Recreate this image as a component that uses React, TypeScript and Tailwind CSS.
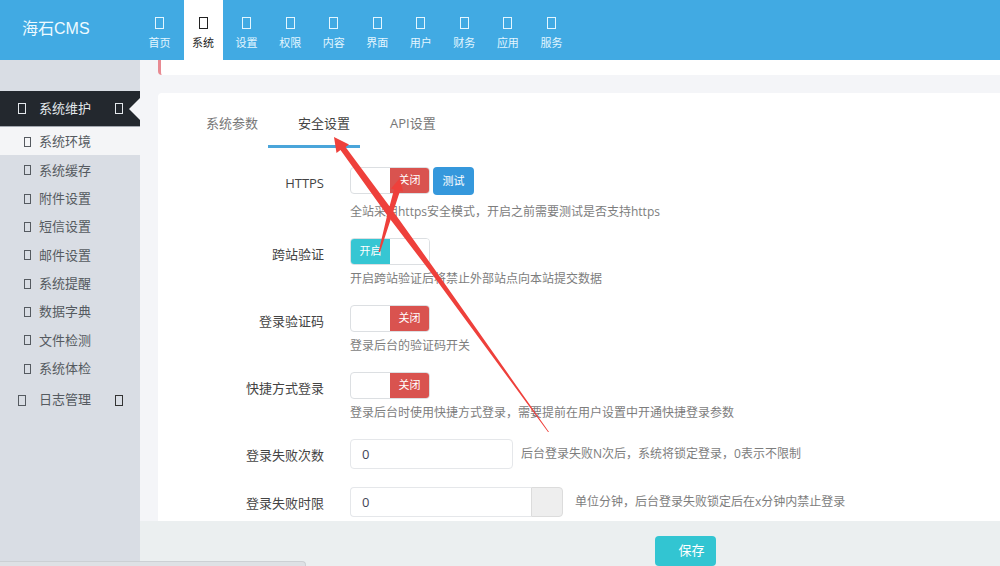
import type { ReactNode } from 'react'

const navItems = ['首页', '系统', '设置', '权限', '内容', '界面', '用户', '财务', '应用', '服务']

const subItems = [
  '系统环境',
  '系统缓存',
  '附件设置',
  '短信设置',
  '邮件设置',
  '系统提醒',
  '数据字典',
  '文件检测',
  '系统体检',
]

const tabs = ['系统参数', '安全设置', 'API设置']

function Switch({ id, on }: { id: string; on?: boolean }) {
  return (
    <label className="relative flex h-[27px] w-20 cursor-pointer overflow-hidden rounded border border-[#dcdfe2] bg-white text-[11px] text-white">
      <input id={id} type="checkbox" defaultChecked={on} className="peer sr-only" />
      <span className="flex w-1/2 items-center justify-center peer-checked:bg-[#36c6d3]">{on ? '开启' : ''}</span>
      <span className="flex w-1/2 items-center justify-center bg-[#d9534f] peer-checked:bg-white">{on ? '' : '关闭'}</span>
    </label>
  )
}

function Row({ id, label, help, children }: { id: string; label: string; help?: string; children: ReactNode }) {
  return (
    <div className="flex gap-[26px]">
      <label htmlFor={id} className="w-[148px] shrink-0 pt-1.5 text-right text-[13px] leading-5 text-[#444]">
        {label}
      </label>
      <div className="min-h-8 flex-1">
        {children}
        {help && <p className="mt-1 text-xs leading-5 text-[#7d7d7d]">{help}</p>}
      </div>
    </div>
  )
}

export default function App() {
  return (
    <div className="relative flex h-screen flex-col overflow-hidden bg-[#f4f5f8] font-['Open_Sans','Noto_Sans_CJK_SC',sans-serif]">
      <header className="flex h-15 shrink-0 bg-[#41aae3] text-white">
        <a href="#" className="w-[140px] pl-[22px] pt-[17px] font-['Liberation_Sans','Noto_Sans_CJK_SC',sans-serif] text-base leading-6 text-[#eefaff]">
          海石CMS
        </a>
        <nav className="flex w-[431px] justify-between">
          {navItems.map((item) => (
            <a
              key={item}
              href="#"
              className={`flex w-[39px] flex-col items-center pt-[17px] text-[11px] leading-4 ${
                item === '系统' ? 'bg-white text-[#222]' : 'text-[#e3f6ff]'
              }`}
            >
              <span className="mb-1.5 h-3 w-[9px] border border-current" />
              {item}
            </a>
          ))}
        </nav>
      </header>

      <div className="flex min-h-0 flex-1">
        <aside className="w-[140px] shrink-0 bg-[#d9dde4] pt-[31px] text-[13px] text-[#555a60]">
          <a href="#" className="relative flex h-9 items-center border-b border-[#a3a8b0] bg-[#23282e] pl-[18px] text-[#e4e8ec]">
            <span className="h-[11px] w-2 border border-current" />
            <span className="ml-[13px]">系统维护</span>
            <span className="ml-auto mr-[17px] h-[11px] w-2 border border-current" />
            <svg className="absolute right-0 top-[7px] h-[22px] w-[11px]" viewBox="0 0 11 22">
              <path d="M11 0v22L0 11z" fill="#f4f5f8" />
            </svg>
          </a>
          <ul className="flex h-[255px] flex-col">
            {subItems.map((item, i) => (
              <li key={item} className={`flex-1 ${i === 0 ? 'bg-[#f4f5f7]' : ''}`}>
                <a href="#" className="flex h-full items-center gap-2 pl-6 pt-0.5">
                  <span className="h-2.5 w-[7px] border border-current" />
                  {item}
                </a>
              </li>
            ))}
          </ul>
          <a href="#" className="flex h-9 items-center pl-[18px]">
            <span className="h-[11px] w-2 border border-current" />
            <span className="ml-[13px]">日志管理</span>
            <span className="ml-auto mr-[17px] h-[11px] w-2 border border-[#333]" />
          </a>
        </aside>

        <main className="flex min-w-0 flex-1 flex-col">
          <div className="min-h-0 flex-1 overflow-hidden pl-[18px]">
            <div className="h-[15px] rounded-bl border-l-[3px] border-[#e88a92] bg-white" />
            <section className="mt-[18px] h-full rounded-tl bg-white pl-[18px]">
              <div className="flex h-[55px]" role="tablist">
                {tabs.map((tab) => (
                  <button
                    key={tab}
                    role="tab"
                    aria-selected={tab === '安全设置'}
                    className={`border-b-[3px] pb-2 pl-[30px] pr-2.5 pt-4 text-[13px] leading-7 ${
                      tab === '安全设置' ? 'border-[#4aa5da] text-[#444]' : 'border-transparent text-[#777]'
                    }`}
                  >
                    {tab}
                  </button>
                ))}
              </div>

              <form className="flex flex-col gap-4 pt-[19px]">
                <Row id="https" label="HTTPS" help="全站采用https安全模式，开启之前需要测试是否支持https">
                  <div className="flex h-[31px] gap-[3px]">
                    <Switch id="https" />
                    <button type="button" className="h-7 w-[41px] rounded-sm bg-[#3598dc] text-[11px] text-white">
                      测试
                    </button>
                  </div>
                </Row>
                <Row id="csrf" label="跨站验证" help="开启跨站验证后将禁止外部站点向本站提交数据">
                  <Switch id="csrf" on />
                </Row>
                <Row id="captcha" label="登录验证码" help="登录后台的验证码开关">
                  <Switch id="captcha" />
                </Row>
                <Row id="quick" label="快捷方式登录" help="登录后台时使用快捷方式登录，需要提前在用户设置中开通快捷登录参数">
                  <Switch id="quick" />
                </Row>
                <Row id="times" label="登录失败次数">
                  <div className="flex items-center gap-2">
                    <input
                      id="times"
                      defaultValue="0"
                      className="h-[30px] w-[163px] rounded border border-[#e5e7ea] px-[11px] text-[13px] text-[#445]"
                    />
                    <span className="text-xs text-[#7d7d7d]">后台登录失败N次后，系统将锁定登录，0表示不限制</span>
                  </div>
                </Row>
                <Row id="limit" label="登录失败时限">
                  <div className="flex items-center">
                    <input
                      id="limit"
                      defaultValue="0"
                      className="h-[30px] w-[181px] rounded-l border border-r-0 border-[#e5e7ea] px-[11px] text-[13px] text-[#445]"
                    />
                    <span className="h-[30px] w-8 rounded-r border border-[#dcdcdc] bg-[#eee]" />
                    <span className="ml-3 text-xs text-[#7d7d7d]">单位分钟，后台登录失败锁定后在x分钟内禁止登录</span>
                  </div>
                </Row>
              </form>
            </section>
          </div>
          <footer className="flex h-[45px] shrink-0 justify-center bg-[#ebeff0] pl-[231px] pt-[15px]">
            <button className="h-[30px] w-[61px] rounded bg-[#32c5d2] pl-3 text-[13px] text-white">保存</button>
          </footer>
        </main>
      </div>

      {/* browser status bubble */}
      <div className="absolute bottom-0 left-0 h-[5px] w-[306px] rounded-tr border-r border-t border-[#ccd0d4] bg-[#dee1e5]" />

      {/* guide arrows over the form */}
      <svg className="pointer-events-none absolute left-0 top-0 h-[566px] w-[1000px]" viewBox="0 0 1000 566" fill="#ee403b">
        <path d="M334 137L349 144.500L345.500 147L393 211L433 267L549 432L548 432L429 270L387 215L340.500 150L336.500 153z" />
        <path d="M400 178L403 191.500L400 191L391.500 217L380 252L378.500 252L387 216L394 189.500L391 188.500z" />
      </svg>
    </div>
  )
}
